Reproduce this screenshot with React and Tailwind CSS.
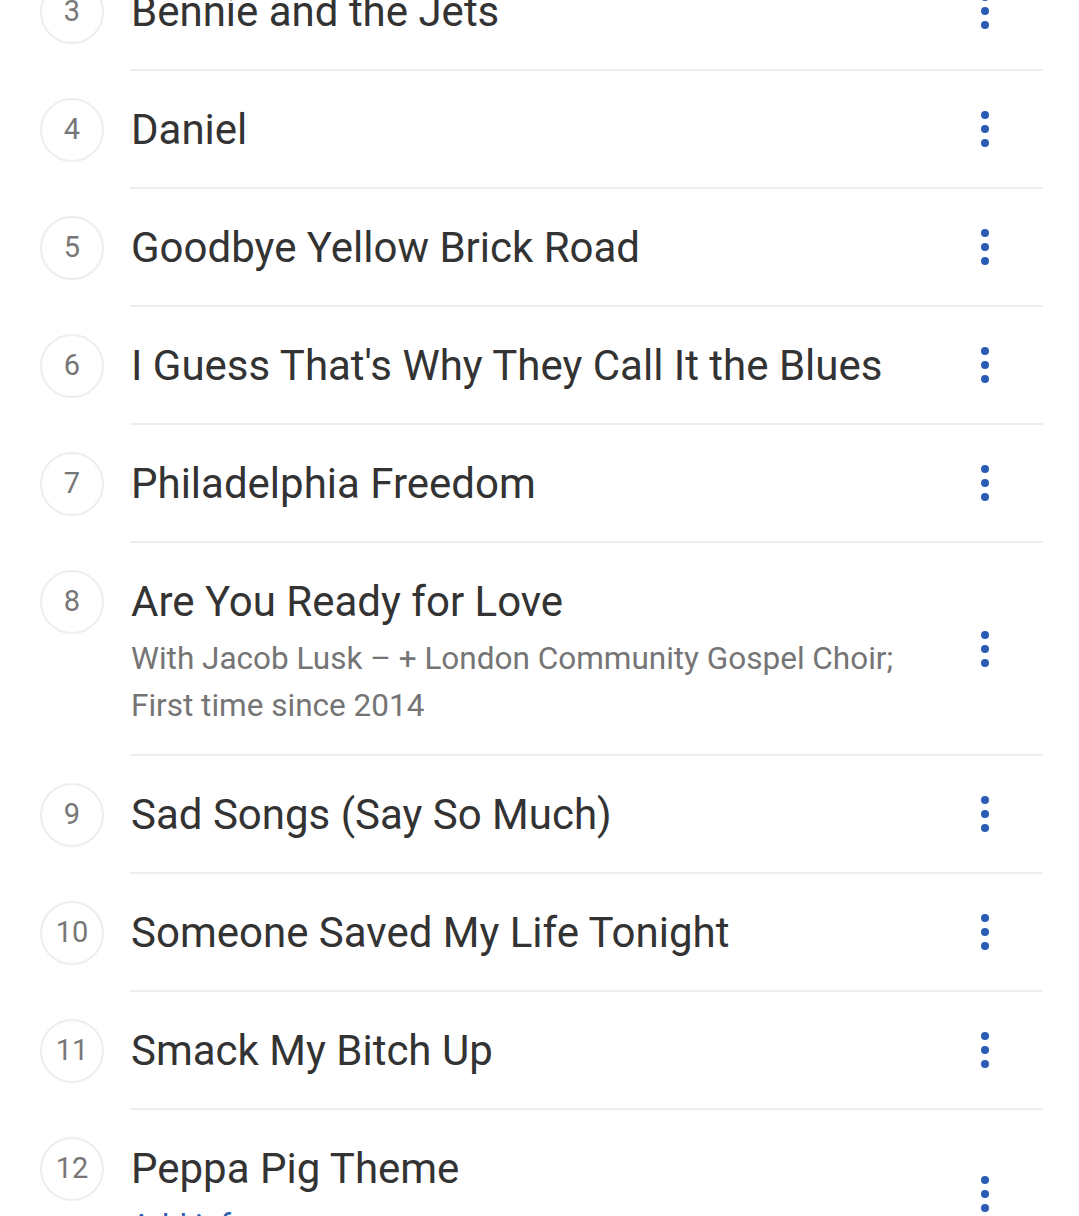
import React from "react";

const songs = [
  { n: 3, t: "Bennie and the Jets" },
  { n: 4, t: "Daniel" },
  { n: 5, t: "Goodbye Yellow Brick Road" },
  { n: 6, t: "I Guess That's Why They Call It the Blues" },
  { n: 7, t: "Philadelphia Freedom" },
  {
    n: 8,
    t: "Are You Ready for Love",
    sub: ["With Jacob Lusk \u2013 + London Community Gospel Choir;", "First time since 2014"],
  },
  { n: 9, t: "Sad Songs (Say So Much)" },
  { n: 10, t: "Someone Saved My Life Tonight" },
  { n: 11, t: "Smack My Bitch Up" },
  { n: 12, t: "Peppa Pig Theme", link: "Add info" },
];

function Kebab() {
  return (
    <div className="flex w-[116px] shrink-0 flex-col items-center justify-center gap-[6px]">
      <span className="block h-[8px] w-[8px] rounded-full bg-[#2a5cb4]" />
      <span className="block h-[8px] w-[8px] rounded-full bg-[#2a5cb4]" />
      <span className="block h-[8px] w-[8px] rounded-full bg-[#2a5cb4]" />
    </div>
  );
}

function Row({ s }) {
  return (
    <div className="flex">
      <div className="w-[130px] shrink-0 pl-[40px] pt-[27px]">
        <div className="flex h-[64px] w-[64px] items-center justify-center rounded-full border-2 border-[#eeeeee] text-[29px] text-[#777777]">
          {s.n}
        </div>
      </div>
      <div className="mr-[36px] flex flex-1 border-b-2 border-[#eeeeee]">
        <div className="flex-1 pb-[29px] pl-[1px] pt-[31px]">
          <div className="text-[42px] leading-[56px] text-[#333333]">{s.t}</div>
          {s.sub && (
            <div className="-mb-[4px] mt-[5px] text-[31.5px] leading-[47px] text-[#757575]">
              {s.sub.map((l) => (
                <div key={l}>{l}</div>
              ))}
            </div>
          )}
          {s.link && (
            <div className="mt-[5px] text-[31.5px] leading-[47px] text-[#2a5cb4]">{s.link}</div>
          )}
        </div>
        <Kebab />
      </div>
    </div>
  );
}

export default function App() {
  return (
    <div
      className="h-[1216px] w-[1079px] overflow-hidden bg-white"
      style={{ fontFamily: "Roboto, 'Noto Sans', sans-serif" }}
    >
      <div className="-mt-[47px]">
        {songs.map((s) => (
          <Row key={s.n} s={s} />
        ))}
      </div>
    </div>
  );
}
